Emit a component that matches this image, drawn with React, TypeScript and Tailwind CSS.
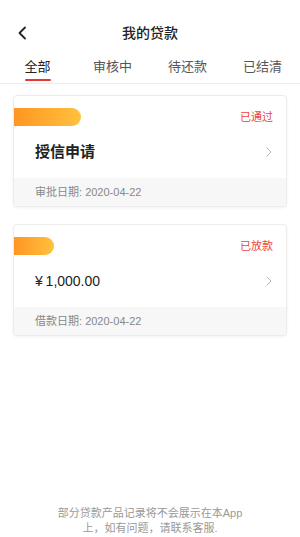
import React from 'react';

interface LoanCardProps {
  pillWidth: string;
  status: string;
  title: string;
  dateLabel: string;
  date: string;
  bold?: boolean;
}

function LoanCard({ pillWidth, status, title, dateLabel, date, bold = true }: LoanCardProps) {
  return (
    <div className="mx-[13px] rounded-[4px] border border-[#ececec] bg-white shadow-[0_1px_3px_rgba(0,0,0,0.06)] overflow-hidden">
      <div className="flex items-center justify-between pt-3 pr-[13px]">
        <div className={`${pillWidth} h-[18px] rounded-r-full bg-gradient-to-r from-[#ff9522] to-[#ffc13e]`} />
        <span className="text-[11px] text-[#e8453c]">{status}</span>
      </div>
      <div className="h-[52px] flex items-center justify-between pl-[21px] pr-[14px]">
        <span className={`text-[#222] ${bold ? 'text-[15px] font-semibold' : 'text-[14px] font-normal'}`}>{title}</span>
        <svg width="6" height="10" viewBox="0 0 6 10" fill="none">
          <path d="M1 1l4 4-4 4" stroke="#b5b5b5" strokeWidth="1" strokeLinecap="round" strokeLinejoin="round" />
        </svg>
      </div>
      <div className="h-[28px] flex items-center pl-[21px] bg-[#f7f7f7] text-[11px] text-[#888]">
        {dateLabel}: {date}
      </div>
    </div>
  );
}

export default function App() {
  const tabs = ['全部', '审核中', '待还款', '已结清'];

  return (
    <div className="min-h-[537px] flex flex-col bg-white font-['Liberation_Sans','Noto_Sans_CJK_SC',sans-serif]">
      {/* Header */}
      <div className="relative h-[34px] mt-4 flex items-center justify-center">
        <svg className="absolute left-[17px]" width="10" height="14" viewBox="0 0 10 14" fill="none">
          <path d="M8 1.5L2.5 7 8 12.5" stroke="#222" strokeWidth="1.8" strokeLinecap="round" strokeLinejoin="round" />
        </svg>
        <span className="text-[14px] font-medium text-[#222]">我的贷款</span>
      </div>

      {/* Tabs */}
      <div className="grid grid-cols-4 h-[34px] border-b border-[#ececec]">
        {tabs.map((tab, i) => (
          <div key={tab} className="relative flex items-center justify-center">
            <span className={`text-[13px] ${i === 0 ? 'text-[#222]' : 'text-[#555]'}`}>{tab}</span>
            {i === 0 && <div className="absolute bottom-[2px] w-[26px] h-[2px] rounded-full bg-[#e53935]" />}
          </div>
        ))}
      </div>

      {/* Cards */}
      <div className="flex flex-col gap-[17px] mt-[11px]">
        <LoanCard pillWidth="w-[67px]" status="已通过" title="授信申请" dateLabel="审批日期" date="2020-04-22" />
        <LoanCard pillWidth="w-[40px]" status="已放款" title={'¥\u20091,000.00'} dateLabel="借款日期" date="2020-04-22" bold={false} />
      </div>

      {/* Footer note */}
      <div className="mt-auto pb-[1px] text-center text-[11px] leading-[15px] text-[#999]">
        部分贷款产品记录将不会展示在本App
        <br />
        上，如有问题，请联系客服.
      </div>
    </div>
  );
}
